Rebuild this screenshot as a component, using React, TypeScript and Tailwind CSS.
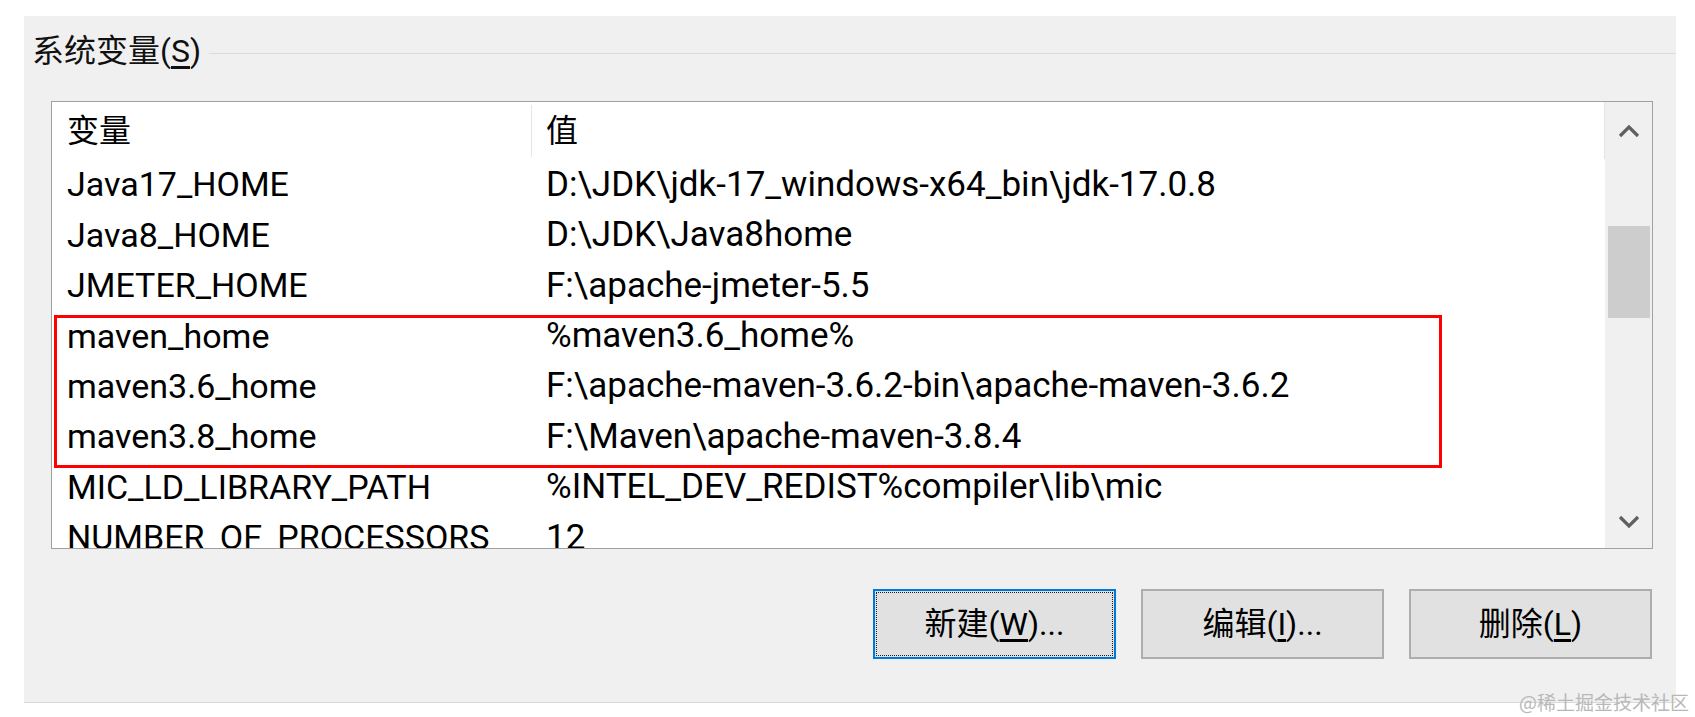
import React from 'react'

const rows: [string, string][] = [
  ['Java17_HOME', 'D:\\JDK\\jdk-17_windows-x64_bin\\jdk-17.0.8'],
  ['Java8_HOME', 'D:\\JDK\\Java8home'],
  ['JMETER_HOME', 'F:\\apache-jmeter-5.5'],
  ['maven_home', '%maven3.6_home%'],
  ['maven3.6_home', 'F:\\apache-maven-3.6.2-bin\\apache-maven-3.6.2'],
  ['maven3.8_home', 'F:\\Maven\\apache-maven-3.8.4'],
  ['MIC_LD_LIBRARY_PATH', '%INTEL_DEV_REDIST%compiler\\lib\\mic'],
  ['NUMBER_OF_PROCESSORS', '12'],
]

const Chevron = ({ up }: { up?: boolean }) => (
  <svg width="22" height="14" viewBox="0 0 22 14">
    <polyline
      points={up ? '2,12 11,3 20,12' : '2,2 11,11 20,2'}
      fill="none"
      stroke="#606060"
      strokeWidth="3.2"
      strokeLinejoin="miter"
    />
  </svg>
)

const Button = ({ label, hotkey, tail, focused }: { label: string; hotkey: string; tail: string; focused?: boolean }) => (
  <div
    className={`w-[243px] h-[70px] flex bg-[#e1e1e1] border-2 ${focused ? 'border-[#0078d7]' : 'border-[#adadad]'}`}
  >
    <div className={`flex-1 m-[1px] flex items-center justify-center border border-dotted ${focused ? 'border-[#222]' : 'border-transparent'}`}>
      <span className="text-[32px] leading-none text-black">
        {label}(<u className="underline-offset-4">{hotkey}</u>){tail}
      </span>
    </div>
  </div>
)

export default function App() {
  return (
    <div className="relative w-[1695px] h-[717px] overflow-hidden bg-white font-['Roboto','Noto_Sans_CJK_SC',sans-serif] text-black">
      <div className="ml-[24px] mt-[16px] w-[1652px] h-[687px] flex flex-col bg-[#f0f0f0] border-b border-[#dadada]">
        {/* group title */}
        <div className="mt-[15px] h-[40px] pl-[8px] flex items-center">
          <span className="text-[32px] leading-none text-[#111]">
            系统变量(<u className="underline-offset-4">S</u>)
          </span>
          <div className="flex-1 ml-[8px] mt-[4px] h-px bg-[#dcdcdc]" />
        </div>

        {/* list view */}
        <div className="relative ml-[27px] mt-[30px] w-[1602px] h-[448px] flex bg-white border border-[#a0a0a0]">
          <div className="flex-1 flex flex-col overflow-hidden">
            <div className="h-[57px] shrink-0 flex items-center border-r border-[#e5e5e5]">
              <div className="w-[480px] h-[52px] pl-[15px] flex items-center border-r border-[#e5e5e5] text-[32px] leading-none">
                变量
              </div>
              <div className="pl-[14px] text-[32px] leading-none">值</div>
            </div>
            {rows.map(([name, value]) => (
              <div key={name} className="h-[50.45px] shrink-0 flex items-center leading-none whitespace-nowrap">
                <div className="w-[480px] pl-[15px] text-[34px]">{name}</div>
                <div className="pl-[14px] text-[35px]">{value}</div>
              </div>
            ))}
          </div>

          {/* scrollbar */}
          <div className="w-[47px] shrink-0 flex flex-col items-center bg-[#f0f0f0]">
            <div className="mt-[22px]">
              <Chevron up />
            </div>
            <div className="mt-[88px] w-[42px] h-[92px] bg-[#cdcdcd]" />
            <div className="mt-auto mb-[19px]">
              <Chevron />
            </div>
          </div>

          {/* red highlight */}
          <div className="absolute left-[2px] top-[213px] w-[1388px] h-[153px] border-[3px] border-[#ff0000] pointer-events-none" />
        </div>

        {/* buttons */}
        <div className="mt-[40px] pr-[24px] flex justify-end gap-[25px]">
          <Button label="新建" hotkey="W" tail="..." focused />
          <Button label="编辑" hotkey="I" tail="..." />
          <Button label="删除" hotkey="L" tail="" />
        </div>
      </div>

      <div className="absolute right-[6px] bottom-[3px] text-[19px] leading-tight text-[#b8b8b8] font-['Noto_Sans_CJK_SC',sans-serif]">
        @稀土掘金技术社区
      </div>
    </div>
  )
}
